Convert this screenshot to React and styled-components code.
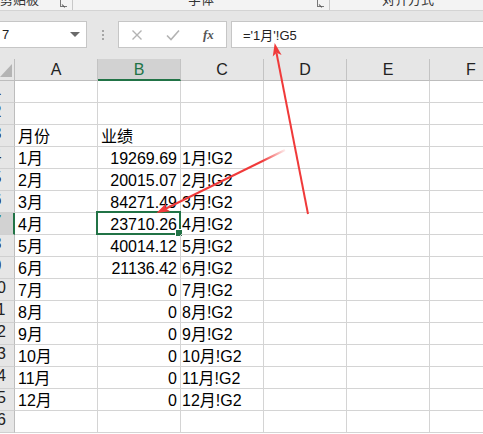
import React from "react";
import styled, { createGlobalStyle } from "styled-components";

const Global = createGlobalStyle`
  html, body { margin: 0; padding: 0; background: #fff; overflow: hidden; }
  body { font-family: "Liberation Sans", "Noto Sans CJK SC", sans-serif; }
  * { box-sizing: border-box; }
`;

const Page = styled.div`
  position: relative;
  width: 483px;
  height: 434px;
  overflow: hidden;
  background: #fff;
`;

const Ribbon = styled.div`
  height: 11px;
  display: flex;
  background: #f3f3f3;
  border-bottom: 1px solid #d4d4d4;
  overflow: hidden;
`;

const Group = styled.div`
  position: relative;
  width: ${(p) => p.$w}px;
  flex: none;
  display: flex;
  justify-content: ${(p) => (p.$left ? "flex-start" : "center")};
  border-right: ${(p) => (p.$sep ? "1px solid #c8c8c8" : "none")};
  height: 10px;
`;

const GroupLabel = styled.span`
  font-size: 13px;
  line-height: 14px;
  margin-top: -7px;
  color: #333;
  white-space: nowrap;
`;

const Launcher = styled.span`
  position: absolute;
  right: 5px;
  top: 0;
  width: 7px;
  height: 7px;
  border-left: 1px solid #777;
  border-bottom: 1px solid #777;
  &::after {
    content: "";
    position: absolute;
    left: 1px;
    bottom: 1px;
    width: 4px;
    height: 1px;
    background: #555;
    transform: rotate(45deg);
    transform-origin: left;
  }
`;

const FormulaArea = styled.div`
  height: 48px;
  background: #e6e6e6;
  display: flex;
  align-items: flex-start;
  padding-top: 10px;
`;

const NameBox = styled.div`
  margin-left: -1px;
  width: 88px;
  height: 27px;
  background: #fff;
  border: 1px solid #c6c6c6;
  display: flex;
  align-items: center;
  justify-content: space-between;
  padding: 0 6px 0 2px;
  font-size: 13px;
  color: #222;
`;

const Caret = styled.span`
  width: 0;
  height: 0;
  border-left: 5px solid transparent;
  border-right: 5px solid transparent;
  border-top: 5px solid #6a6a6a;
`;

const Dots = styled.div`
  width: 31px;
  height: 27px;
  display: flex;
  flex-direction: column;
  align-items: center;
  justify-content: center;
  gap: 2px;
  & > span {
    width: 2px;
    height: 2px;
    background: #a6a6a6;
  }
`;

const BtnBox = styled.div`
  width: 109px;
  height: 27px;
  background: #fff;
  border: 1px solid #c6c6c6;
  display: flex;
  align-items: center;
  gap: 23px;
  padding-left: 12px;
`;

const FxLabel = styled.span`
  font-family: "Liberation Serif", serif;
  font-style: italic;
  font-weight: bold;
  font-size: 13px;
  color: #555;
`;

const FormulaBox = styled.div`
  flex: 1;
  margin-left: 4px;
  margin-right: -2px;
  height: 27px;
  background: #fff;
  border: 1px solid #c6c6c6;
  display: flex;
  align-items: center;
  padding-left: 11px;
  font-size: 13px;
  color: #222;
`;

const Grid = styled.div`
  display: grid;
  grid-template-columns: 15px repeat(6, 83px);
  grid-auto-rows: 22px;
`;

const Corner = styled.div`
  position: relative;
  background: #e6e6e6;
  border-right: 1px solid #bdbdbd;
  border-bottom: 1px solid #bdbdbd;
  &::after {
    content: "";
    position: absolute;
    right: 2px;
    bottom: 3px;
    width: 0;
    height: 0;
    border-left: 12px solid transparent;
    border-bottom: 13px solid #b4b4b4;
  }
`;

const ColHead = styled.div`
  background: ${(p) => (p.$sel ? "#d2d2d2" : "#e6e6e6")};
  border-right: 1px solid #c3c3c3;
  border-bottom: ${(p) => (p.$sel ? "2px solid #217346" : "1px solid #bdbdbd")};
  color: ${(p) => (p.$sel ? "#217346" : "#222")};
  font-size: 16px;
  line-height: 18px;
  padding-top: 2px;
  text-align: center;
`;

const RowHead = styled.div`
  background: ${(p) => (p.$sel ? "#d2d2d2" : "#e6e6e6")};
  border-right: ${(p) => (p.$sel ? "2px solid #217346" : "1px solid #bdbdbd")};
  border-bottom: 1px solid #d0d0d0;
  overflow: hidden;
  color: ${(p) => (p.$sel ? "#217346" : "#222")};
  font-size: 16px;
  line-height: 18px;
`;

const RowNum = styled.div`
  width: 30px;
  margin-left: -18px;
  text-align: center;
`;

const Cell = styled.div`
  position: relative;
  border-right: 1px solid #d4d4d4;
  border-bottom: 1px solid #d4d4d4;
  font-size: 16px;
  line-height: 18px;
  padding-top: 3px;
  padding-left: ${(p) => (p.$align === "right" ? 0 : p.$pl || 0)}px;
  padding-right: ${(p) => (p.$align === "right" ? 3 : 0)}px;
  text-align: ${(p) => p.$align || "left"};
  white-space: nowrap;
  color: #000;
`;

const SelBox = styled.div`
  position: absolute;
  left: -2px;
  top: -2px;
  right: -1px;
  bottom: -1px;
  border: 2px solid #217346;
  pointer-events: none;
  &::after {
    content: "";
    position: absolute;
    right: -4px;
    bottom: -4px;
    width: 6px;
    height: 6px;
    background: #217346;
    border: 1px solid #fff;
  }
`;

const Overlay = styled.svg`
  position: absolute;
  left: 0;
  top: 0;
  pointer-events: none;
`;

const data = [
  null,
  null,
  ["月份", "业绩", ""],
  ["1月", "19269.69", "1月!G2"],
  ["2月", "20015.07", "2月!G2"],
  ["3月", "84271.49", "3月!G2"],
  ["4月", "23710.26", "4月!G2"],
  ["5月", "40014.12", "5月!G2"],
  ["6月", "21136.42", "6月!G2"],
  ["7月", "0", "7月!G2"],
  ["8月", "0", "8月!G2"],
  ["9月", "0", "9月!G2"],
  ["10月", "0", "10月!G2"],
  ["11月", "0", "11月!G2"],
  ["12月", "0", "12月!G2"],
  null,
];

const cols = ["A", "B", "C", "D", "E", "F"];

function Arrowhead({ tip, from, len = 13, half = 4.5 }) {
  const dx = tip[0] - from[0];
  const dy = tip[1] - from[1];
  const d = Math.hypot(dx, dy);
  const ux = dx / d;
  const uy = dy / d;
  const bx = tip[0] - ux * len;
  const by = tip[1] - uy * len;
  const px = -uy;
  const py = ux;
  const pts = [
    [tip[0], tip[1]],
    [bx + px * half, by + py * half],
    [tip[0] - ux * (len - 3), tip[1] - uy * (len - 3)],
    [bx - px * half, by - py * half],
  ];
  return <polygon points={pts.map((p) => p.join(",")).join(" ")} fill="#f03a3a" />;
}

export default function App() {
  return (
    <Page>
      <Global />
      <Ribbon>
        <Group $w={73} $sep $left>
          <GroupLabel>剪贴板</GroupLabel>
          <Launcher />
        </Group>
        <Group $w={257} $sep>
          <GroupLabel>字体</GroupLabel>
          <Launcher />
        </Group>
        <Group $w={156}>
          <GroupLabel>对齐方式</GroupLabel>
        </Group>
      </Ribbon>
      <FormulaArea>
        <NameBox>
          <span>7</span>
          <Caret />
        </NameBox>
        <Dots>
          <span />
          <span />
          <span />
        </Dots>
        <BtnBox>
          <svg width="12" height="12" viewBox="0 0 12 12">
            <path d="M1.5 1.5 L10.5 10.5 M10.5 1.5 L1.5 10.5" stroke="#b3b3b3" strokeWidth="1.4" fill="none" />
          </svg>
          <svg width="14" height="12" viewBox="0 0 14 12">
            <path d="M1 6.5 L5 10.5 L13 1.5" stroke="#b3b3b3" strokeWidth="1.6" fill="none" />
          </svg>
          <FxLabel>fx</FxLabel>
        </BtnBox>
        <FormulaBox>='1月'!G5</FormulaBox>
      </FormulaArea>
      <Grid>
        <Corner />
        {cols.map((c) => (
          <ColHead key={c} $sel={c === "B"}>
            {c}
          </ColHead>
        ))}
        {data.map((row, i) => {
          const r = i + 1;
          const sel = r === 7;
          return (
            <React.Fragment key={r}>
              <RowHead $sel={sel}>
                <RowNum>{r}</RowNum>
              </RowHead>
              <Cell $pl={3}>{row ? row[0] : ""}</Cell>
              <Cell $align={row && r > 3 ? "right" : "left"} $pl={3}>
                {row ? row[1] : ""}
                {sel && <SelBox />}
              </Cell>
              <Cell $pl={1}>{row ? row[2] : ""}</Cell>
              <Cell />
              <Cell />
              <Cell />
            </React.Fragment>
          );
        })}
      </Grid>
      <Overlay width="483" height="434" viewBox="0 0 483 434">
        <defs>
          <linearGradient id="fade" gradientUnits="userSpaceOnUse" x1="285" y1="150" x2="262" y2="161">
            <stop offset="0" stopColor="#f03a3a" stopOpacity="0.1" />
            <stop offset="1" stopColor="#f03a3a" stopOpacity="1" />
          </linearGradient>
        </defs>
        <line x1="285" y1="150" x2="164" y2="209.5" stroke="url(#fade)" strokeWidth="2" />
        <Arrowhead tip={[156.5, 213]} from={[285, 150]} />
        <line x1="308" y1="214" x2="276.5" y2="53" stroke="#f03a3a" strokeWidth="2" />
        <Arrowhead tip={[274.7, 43]} from={[308, 214]} />
      </Overlay>
    </Page>
  );
}
